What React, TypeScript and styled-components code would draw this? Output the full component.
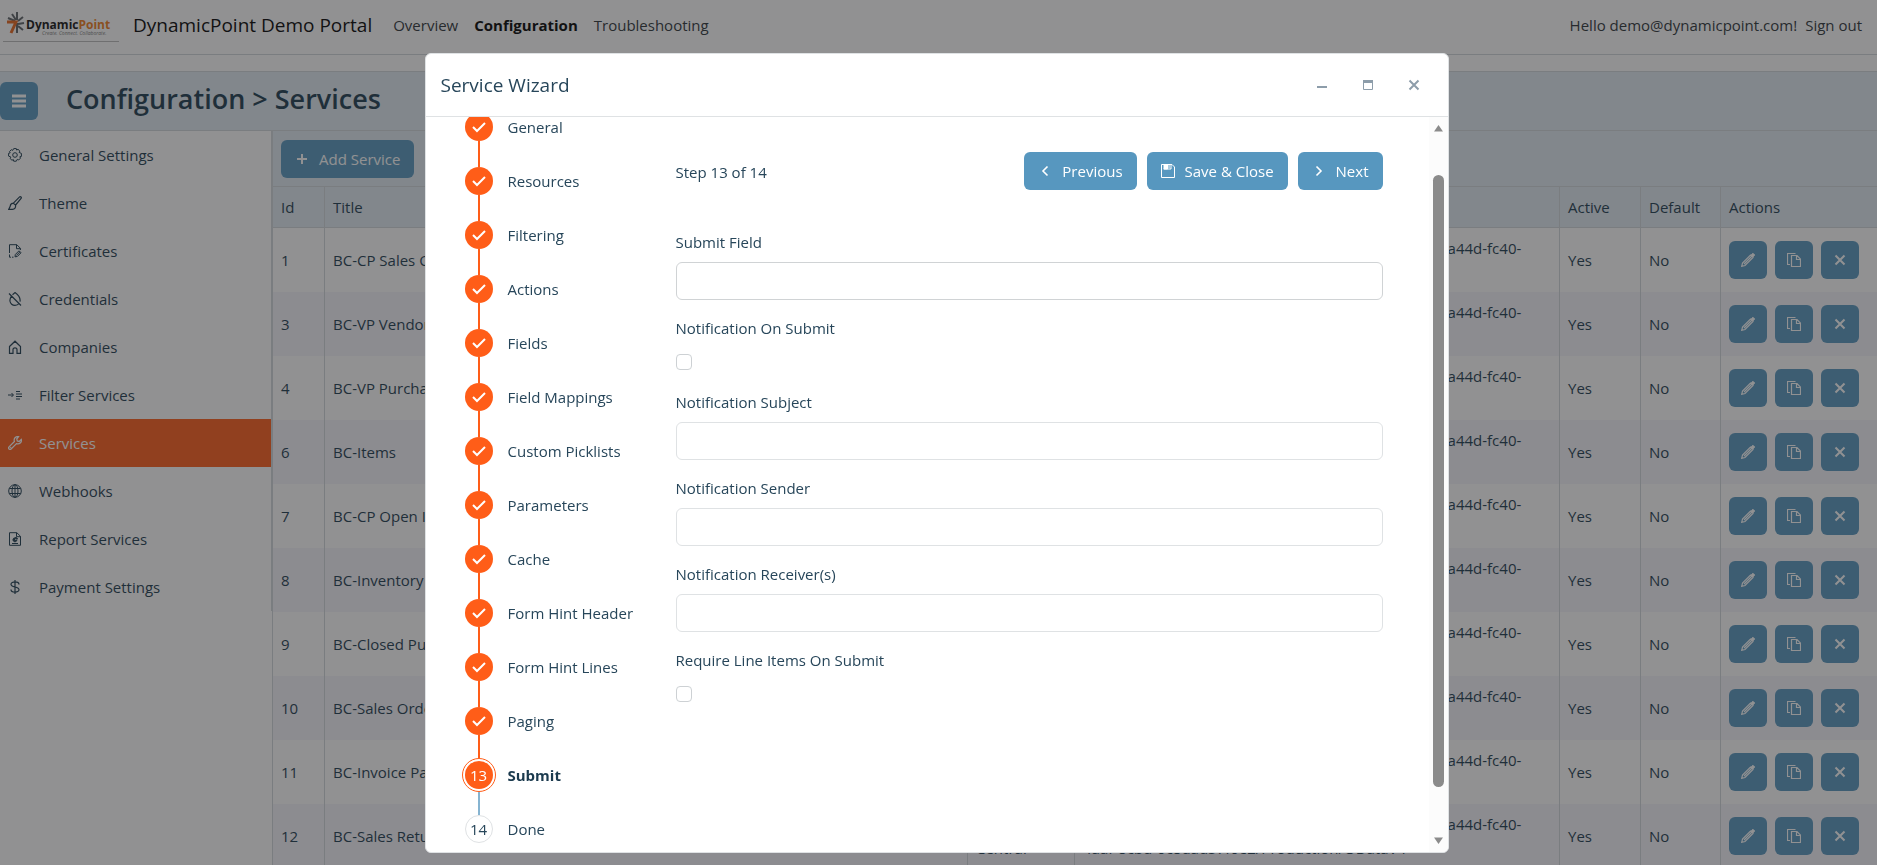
import React, { useLayoutEffect, useRef } from "react";
import styled, { createGlobalStyle, css } from "styled-components";

const ink = "#1b3a4e";
const blue = "#5797bf";
const orange = "#ff5d18";
const band = "#e0eaf2";
const line = "#d0d7db";

const Global = createGlobalStyle`
  * { box-sizing: border-box; }
  html, body, #root { height: 100%; }
  body { margin: 0; overflow: hidden; background: #fff; color: ${ink};
    font: 15px/24px "Open Sans", "Noto Sans", sans-serif; }
  a { color: inherit; text-decoration: none; }
  button, input { font: inherit; color: inherit; }
  button { cursor: pointer; }
  ul, ol, h1, h2, p { margin: 0; padding: 0; }
  ul, ol { list-style: none; }
`;

const Page = styled.div`height: 100%; display: flex; flex-direction: column; overflow: hidden;`;
const Nav = styled.header`
  flex: none; height: 55px; padding: 0 15px 4px 3px; display: flex; align-items: center;
  border-bottom: 1px solid ${line}; color: #2b3237;
`;
const Logo = styled.a`display: block; width: 116px; height: 34px; border-bottom: 1px solid #bbb;`;
const Brand = styled.a`margin-left: 14px; font-size: 19px; color: #000;`;
const Links = styled.nav`display: flex; gap: 16px; margin-left: 21px;`;
const NavLink = styled.a<{ $on?: boolean }>`font-weight: ${p => (p.$on ? 700 : 400)}; ${p => p.$on && "color:#000;"}`;
const Account = styled.div`margin-left: auto; display: flex; gap: 8px;`;
const TitleBar = styled.div`
  flex: none; margin-top: 16px; height: 60px; display: flex; align-items: center; gap: 28px;
  background: ${band}; border: solid ${line}; border-width: 1px 0;
`;
const Title = styled.h1`font-size: 27px; line-height: 40px; font-weight: 600; padding-bottom: 4px;`;
const Btn = styled.button<{ $square?: boolean }>`
  display: inline-flex; align-items: center; justify-content: center; gap: 10px;
  height: 38px; padding: 0 14px; border: 0; border-radius: 6px; background: ${blue}; color: #fff;
  white-space: nowrap;
  ${p => p.$square && "width: 38px; padding: 0;"}
`;
const Main = styled.div`flex: 1; min-height: 0; display: flex; align-items: flex-start;`;
const Side = styled.nav`flex: none; width: 272px; border-right: 1px solid ${line};`;
const SideLink = styled.a<{ $on?: boolean }>`
  display: flex; align-items: center; gap: 17px; height: 48px; padding: 0 8px;
  ${p => p.$on && css`background: ${orange}; color: #fff;`}
`;
const Content = styled.main`flex: 1; min-width: 0; border-left: 1px solid ${line};`;
const Toolbar = styled.div`height: 56px; padding: 9px 8px; background: ${band}; border-bottom: 1px solid ${line};`;
const Grid = styled.table`
  width: 100%; table-layout: fixed; border-collapse: separate; border-spacing: 0; white-space: nowrap;
  th { height: 41px; padding: 0 8px; text-align: left; font-weight: 400; background: ${band}; border-bottom: 1px solid ${line}; }
  td { height: 64px; padding: 0 8px; overflow: hidden; }
  th + th, td + td { border-left: 1px solid ${line}; }
  tbody tr:nth-child(even) { background: #f4f5fb; }
`;
const Actions = styled.div`display: flex; gap: 8px;`;

const Overlay = styled.div`
  position: fixed; inset: 0; display: flex; justify-content: center; align-items: flex-start;
  padding: 53px 4px 0 0; background: rgba(35, 36, 37, 0.5);
`;
const Dialog = styled.section`
  width: 1024px; max-width: 100%; height: calc(100% - 12px); display: flex; flex-direction: column;
  background: #fff; border: 1px solid #dfe2e4; border-radius: 6px; overflow: hidden; color: #27465a;
`;
const DialogHead = styled.header`
  flex: none; height: 63px; padding: 0 15px; display: flex; align-items: center; justify-content: space-between;
  border-bottom: 1px solid #dfe2e4;
`;
const DialogTitle = styled.h2`font-size: 19px; font-weight: 400; line-height: 28px;`;
const WinButtons = styled.div`display: flex; gap: 8px;`;
const WinButton = styled.button`
  width: 38px; height: 38px; border: 0; background: none; color: #8d9daa;
  display: grid; place-items: center; padding: 0;
`;
const DialogBody = styled.div`flex: 1; min-height: 0; display: flex;`;
const Scroller = styled.div`flex: 1; min-width: 0; overflow-y: auto; scrollbar-width: none;`;
const Wizard = styled.div`display: flex; min-height: 842px; padding: 45px 46px 0 39px;`;
const Steps = styled.ol`flex: none; width: 211px;`;
const Step = styled.li<{ $active?: boolean }>`
  display: flex; align-items: flex-start; gap: 15px; font-weight: ${p => (p.$active ? 700 : 400)};
  ${p => p.$active && `color: #1b3a4e;`}
`;
const Rail = styled.span`width: 28px; display: flex; flex-direction: column; align-items: center;`;
const Dot = styled.span<{ $state: string }>`
  width: 28px; height: 28px; border-radius: 50%; display: grid; place-items: center; font-weight: 400;
  background: ${orange}; color: #fff;
  ${p => p.$state === "todo" && css`background: #fff; color: #27465a; border: 1px solid #dfe2e4;`}
  ${p => p.$state === "active" && css`outline: 1px solid ${orange}; outline-offset: 2px;`}
`;
const Track = styled.span<{ $todo?: boolean; $toActive?: boolean }>`
  width: 2px; height: ${p => (p.$todo || p.$toActive ? 23 : 26)}px;
  margin-top: ${p => (p.$todo ? 3 : 0)}px;
  margin-bottom: ${p => (p.$toActive ? 3 : 0)}px;
  background: ${p => (p.$todo ? "#86b4d1" : orange)};
`;
const StepLabel = styled.a`line-height: 28px;`;
const Form = styled.form`flex: 1; min-width: 0; padding-top: 39px;`;
const FormHead = styled.div`display: flex; align-items: center; gap: 10px; margin-bottom: 40px;`;
const StepCount = styled.p`margin-right: auto; padding-top: 2px;`;
const Field = styled.div`display: flex; flex-direction: column; gap: 8px; margin-bottom: 16px;`;
const TextBox = styled.input<{ $strong?: boolean }>`
  width: 100%; height: 38px; padding: 0 12px; background: #fff; border-radius: 6px;
  border: 1px solid ${p => (p.$strong ? "#d0d3d5" : "#dfe2e4")};
`;
const CheckRow = styled.div`height: 26px; display: flex; align-items: flex-end; padding-bottom: 4px;`;
const Check = styled.input`
  appearance: none; width: 16px; height: 16px; margin: 0; border: 1px solid #cdd1d4; border-radius: 4px; background: #fff;
`;
const ScrollBar = styled.div`
  flex: none; width: 19px; padding: 8px 4px; background: #fcfcfc; display: flex; flex-direction: column; align-items: center;
  justify-content: space-between;
`;
const Lane = styled.div`flex: 1; width: 11px; padding: 43px 0 50px;`;
const Thumb = styled.div`height: 100%; border-radius: 6px; background: #8b8b8b;`;

const Icon = ({ children, size = 14 }: { children: React.ReactNode; size?: number }) => (
  <svg width={size} height={size} viewBox="0 0 14 14" fill="none" stroke="currentColor" strokeWidth="1" aria-hidden="true">
    {children}
  </svg>
);

const gear = (
  <Icon>
    <path d="M5.700.600h2.600l.400 1.500 1.300-.800 1.900 1.800-.800 1.300 2.300 1v3l-1.600.400.700 1.300-1.800 1.900-1.400-.700-1 1.900H5.700l-.400-1.700-1.300.800-1.900-1.800.800-1.400-2.300-1V5.300l1.600-.400-.700-1.300 1.800-1.900 1.400.700z" />
    <circle cx="7" cy="7" r="2.300" />
  </Icon>
);
const brush = (
  <Icon>
    <path d="M5.400 7.200 11.600.9c.8-.8 2.300.6 1.500 1.500L7.600 9M5.400 7.200 7.500 9M5.400 7.200c-2 0-3 1-3.200 3.100L.7 13.400H4.500C6.700 13.300 8 11.500 7.500 9" strokeWidth="1.200" />
  </Icon>
);
const certificate = (
  <Icon>
    <path d="M1.500 9V.700h7.300l3.600 3.600V6M8.500.700v4h4M1.500 10.500v2.700h1.500M4 13.200h1.500" />
    <path d="m7.300 10.500 3.700-3.700 2 2-3.700 3.700-2.300.300z" />
    <path d="m8.300 11.500 3.700-3.700" />
  </Icon>
);
const dropOff = (
  <Icon>
    <path d="M3.300 4.300C2 6.300 1.800 8 2 9.200c.6 3 3 4.200 5 4.200 1.600 0 3-.6 4-1.900M4.500 2.700 7 .600c3.500 2.500 5.500 6.300 5 9M1 1.500l12 12" strokeWidth="1.200" />
  </Icon>
);
const home = (
  <Icon>
    <path d="M1.500 6.500 7 1.200l5.500 5.300v6.800h-3.500V9.500c0-2.200-4-2.200-4 0v3.800H1.500z" strokeWidth="1.200" />
  </Icon>
);
const filter = (
  <Icon>
    <path d="M0 7h5M3.500 5l2 2-2 2" />
    <path d="M8 3.500h4M8 6h6M8 8.500h6M8 11h4" />
  </Icon>
);
const wrench = (
  <Icon>
    <path d="M10.600.700c-3-.800-5.200 2-4.200 4.800L1 10.900c-1.300 1.400.7 3.400 2.100 2.100L8.500 7.600c2.900 1 5.600-1.300 4.800-4.200l-2.100 2.100-1.900-.6-.600-1.900z" strokeWidth="1.200" />
    <circle cx="2.500" cy="11.500" r=".4" />
  </Icon>
);
const globe = (
  <Icon>
    <circle cx="7" cy="7" r="6.300" />
    <ellipse cx="7" cy="7" rx="3" ry="6.300" />
    <path d="M7 .700v12.600M1.300 4.500h11.400M1.300 9.500h11.400" />
  </Icon>
);
const report = (
  <Icon>
    <path d="M1.500.700h7.300l3.700 3.600v9h-11zM8.500.700v4h4M4 11.500h6" />
    <path d="M6.500 5.800a2 2 0 1 0 2.400 2.500H6.500zM7.700 5v2h2z" fill="currentColor" />
  </Icon>
);
const dollar = (
  <Icon>
    <path d="M7 0v14M11 4.500C11 1 3 1 3 4.300 3 8 11 6 11 9.800c0 3.200-8 3.200-8-.4" strokeWidth="1.200" />
  </Icon>
);
const cross = (
  <Icon>
    <path d="m2.500 2.500 9 9M11.500 2.500l-9 9" strokeWidth="2" />
  </Icon>
);
const pencil = (
  <Icon>
    <path d="M.700 13.300 1.500 10 9.500 2l2.500 2.500L4 12.500zM3 11 10.500 3.500" strokeWidth="1.200" />
    <path d="M10 2.200 12 .300 13.700 2 11.800 4z" fill="currentColor" />
  </Icon>
);
const copy = (
  <Icon>
    <path d="M3 11.500H.500v-11h8M4.500 2.500h5.500l3.500 3.500v7.500h-9zM9.500 2.500v4h4" strokeWidth="1.200" />
  </Icon>
);
const plus = (
  <Icon>
    <path d="M7 2v10M2 7h10" strokeWidth="2" />
  </Icon>
);

const menu: [string, React.ReactNode][] = [
  ["General Settings", gear],
  ["Theme", brush],
  ["Certificates", certificate],
  ["Credentials", dropOff],
  ["Companies", home],
  ["Filter Services", filter],
  ["Services", wrench],
  ["Webhooks", globe],
  ["Report Services", report],
  ["Payment Settings", dollar],
];

const services: [number, string][] = [
  [1, "BC-CP Sales Orders"],
  [3, "BC-VP Vendors"],
  [4, "BC-VP Purchases"],
  [6, "BC-Items"],
  [7, "BC-CP Open Invoices"],
  [8, "BC-Inventory"],
  [9, "BC-Closed Purchases"],
  [10, "BC-Sales Orders"],
  [11, "BC-Invoice Payments"],
  [12, "BC-Sales Returns"],
];

const steps = [
  "General", "Resources", "Filtering", "Actions", "Fields", "Field Mappings", "Custom Picklists",
  "Parameters", "Cache", "Form Hint Header", "Form Hint Lines", "Paging", "Submit", "Done",
];
const current = 12;

const LogoArt = () => (
  <svg width="116" height="33" viewBox="0 0 116 33" role="img" aria-label="DynamicPoint">
    <g stroke="#5d6266" strokeWidth="2" fill="none">
      <path d="m9 6 4 6M14 4v8M5 10l7 3M15 13l5-4M15 16l6-1M15 18l5 4M14 15v10" />
    </g>
    <path d="M4 14h9L8 25" stroke="#e8641b" strokeWidth="3" fill="none" />
    <text x="23" y="21" fontFamily="Open Sans, sans-serif" fontSize="12" fontWeight="700" fill="#111">
      Dynamic<tspan fill="#f07d1a">Point</tspan>
    </text>
    <text x="39" y="27" fontFamily="Open Sans, sans-serif" fontSize="5" fontStyle="italic" fill="#777">
      Create. Connect. Collaborate.
    </text>
  </svg>
);

function Wizardry() {
  const ref = useRef<HTMLDivElement>(null);
  useLayoutEffect(() => {
    if (ref.current) ref.current.scrollTop = 49;
  }, []);
  const textField = (id: string, label: string, strong = false) => (
    <Field>
      <label htmlFor={id}>{label}</label>
      <TextBox id={id} type="text" $strong={strong} />
    </Field>
  );
  const checkField = (id: string, label: string) => (
    <Field>
      <label htmlFor={id}>{label}</label>
      <CheckRow><Check id={id} type="checkbox" /></CheckRow>
    </Field>
  );
  return (
    <Overlay>
      <Dialog role="dialog" aria-labelledby="wizard-title">
        <DialogHead>
          <DialogTitle id="wizard-title">Service Wizard</DialogTitle>
          <WinButtons>
            <WinButton aria-label="Minimize"><Icon><path d="M2 9h10" strokeWidth="2" /></Icon></WinButton>
            <WinButton aria-label="Maximize"><Icon><path d="M2.500 2.500h9v9h-9z" /><path d="M2 3.500h10" strokeWidth="3" /></Icon></WinButton>
            <WinButton aria-label="Close">{cross}</WinButton>
          </WinButtons>
        </DialogHead>
        <DialogBody>
          <Scroller ref={ref}>
            <Wizard>
              <Steps>
                {steps.map((name, i) => (
                  <Step key={name} $active={i === current}>
                    <Rail>
                      <Dot $state={i < current ? "done" : i === current ? "active" : "todo"}>
                        {i < current ? <Icon><path d="m1 7 4 4 8-8" strokeWidth="2" /></Icon> : i + 1}
                      </Dot>
                      {i < steps.length - 1 && <Track $todo={i >= current} $toActive={i === current - 1} />}
                    </Rail>
                    <StepLabel href="#">{name}</StepLabel>
                  </Step>
                ))}
              </Steps>
              <Form>
                <FormHead>
                  <StepCount>Step 13 of 14</StepCount>
                  <Btn type="button"><Icon><path d="M9.500 2.500 5 7l4.500 4.500" strokeWidth="1.600" /></Icon>Previous</Btn>
                  <Btn type="button">
                    <Icon>
                      <path d="M.500.500h10.500l2.500 2.500v10.500H.500z" />
                      <path d="M3 .500h3.500v4.500H3z" fill="currentColor" />
                      <path d="M2.500 5h7.500V.500M8 .500V4" />
                    </Icon>
                    Save &amp; Close
                  </Btn>
                  <Btn type="button"><Icon><path d="M4.500 2.500 9 7l-4.500 4.500" strokeWidth="1.600" /></Icon>Next</Btn>
                </FormHead>
                {textField("submit-field", "Submit Field", true)}
                {checkField("notify", "Notification On Submit")}
                {textField("subject", "Notification Subject")}
                {textField("sender", "Notification Sender")}
                {textField("receivers", "Notification Receiver(s)")}
                {checkField("require-lines", "Require Line Items On Submit")}
              </Form>
            </Wizard>
          </Scroller>
          <ScrollBar aria-hidden="true">
            <svg width="9" height="7"><path d="M4.500 0 9 6.500H0z" fill="#8b8b8b" /></svg>
            <Lane><Thumb /></Lane>
            <svg width="9" height="7"><path d="M4.500 7 9 .500H0z" fill="#8b8b8b" /></svg>
          </ScrollBar>
        </DialogBody>
      </Dialog>
    </Overlay>
  );
}

export default function App() {
  return (
    <>
      <Global />
      <Page>
        <Nav>
          <Logo href="#"><LogoArt /></Logo>
          <Brand href="#">DynamicPoint Demo Portal</Brand>
          <Links>
            <NavLink href="#">Overview</NavLink>
            <NavLink href="#" $on>Configuration</NavLink>
            <NavLink href="#">Troubleshooting</NavLink>
          </Links>
          <Account>
            <span>Hello demo@dynamicpoint.com!</span>
            <a href="#">Sign out</a>
          </Account>
        </Nav>
        <TitleBar>
          <Btn $square aria-label="Toggle menu">
            <Icon><path d="M0 2h14M0 7h14M0 12h14" strokeWidth="3" /></Icon>
          </Btn>
          <Title>Configuration &gt; Services</Title>
        </TitleBar>
        <Main>
          <Side>
            {menu.map(([name, icon]) => (
              <SideLink key={name} href="#" $on={name === "Services"}>{icon}{name}</SideLink>
            ))}
          </Side>
          <Content>
            <Toolbar><Btn>{plus}Add Service</Btn></Toolbar>
            <Grid>
              <colgroup>
                <col style={{ width: 51 }} /><col /><col style={{ width: 107 }} /><col style={{ width: 485 }} />
                <col style={{ width: 81 }} /><col style={{ width: 80 }} /><col style={{ width: 157 }} />
              </colgroup>
              <thead>
                <tr><th>Id</th><th>Title</th><th>Type</th><th>Endpoint</th><th>Active</th><th>Default</th><th>Actions</th></tr>
              </thead>
              <tbody>
                {services.map(([id, title]) => (
                  <tr key={id}>
                    <td>{id}</td>
                    <td>{title}</td>
                    <td>Business<br />Central</td>
                    <td>https://api.businesscentral.dynamics.com/v2.0/9b4ea44d-fc40-<br />4aaf-8cbd-0c8dad57f0e2/Production/ODataV4</td>
                    <td>Yes</td>
                    <td>No</td>
                    <td>
                      <Actions>
                        <Btn $square aria-label={`Edit ${title}`}>{pencil}</Btn>
                        <Btn $square aria-label={`Copy ${title}`}>{copy}</Btn>
                        <Btn $square aria-label={`Delete ${title}`}>{cross}</Btn>
                      </Actions>
                    </td>
                  </tr>
                ))}
              </tbody>
            </Grid>
          </Content>
        </Main>
      </Page>
      <Wizardry />
    </>
  );
}
